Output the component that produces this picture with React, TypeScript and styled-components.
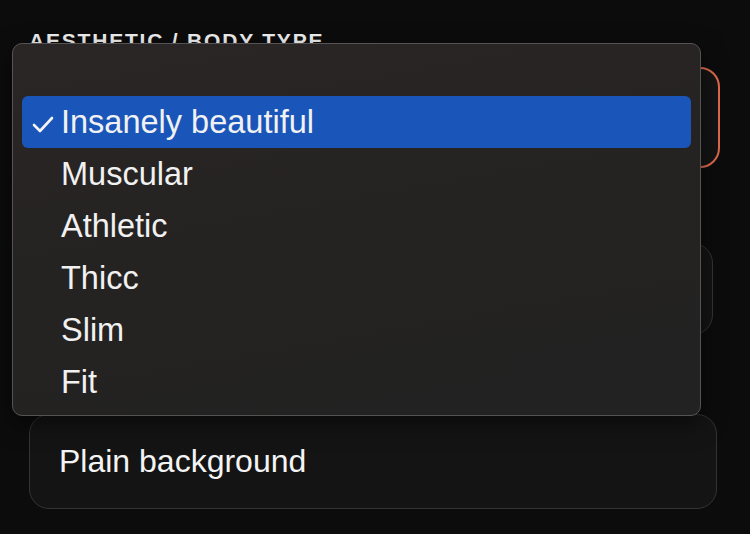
import React from 'react'
import styled, { createGlobalStyle } from 'styled-components'

const GlobalStyle = createGlobalStyle`
  html, body {
    margin: 0;
    padding: 0;
    background: #0c0c0c;
    font-family: "Liberation Sans", Arial, sans-serif;
  }
`

const Page = styled.div`
  position: relative;
  width: 750px;
  height: 534px;
  overflow: hidden;
  background: #0c0c0c;
  box-sizing: border-box;
  padding: 29px 0 0 29px;
  display: flex;
  flex-direction: column;
`

const Label = styled.div<{ $mt?: number }>`
  margin-top: ${p => p.$mt ?? 0}px;
  height: 24px;
  line-height: 24px;
  font-size: 21px;
  font-weight: 700;
  letter-spacing: 1.8px;
  color: #f2f2f2;
  text-transform: uppercase;
`

const Field = styled.div<{ $w: number; $h: number; $mt: number; $focus?: boolean }>`
  margin-top: ${p => p.$mt}px;
  width: ${p => p.$w}px;
  height: ${p => p.$h}px;
  box-sizing: border-box;
  border-radius: 20px;
  border: ${p => (p.$focus ? '2px solid #e06a4c' : '1.5px solid #343434')};
  background: #141414;
  display: flex;
  align-items: center;
  padding-left: 29px;
  font-size: 32px;
  color: #f4f4f4;
`

const Menu = styled.div`
  position: absolute;
  left: 12px;
  top: 43px;
  width: 689px;
  height: 373px;
  box-sizing: border-box;
  border: 1px solid #555353;
  border-radius: 10px;
  background: linear-gradient(170deg, #2a2625 0%, #252322 45%, #222222 100%);
  box-shadow: 0 8px 24px rgba(0, 0, 0, 0.5);
  padding: 52px 9px 0 9px;
  display: flex;
  flex-direction: column;
`

const Option = styled.div<{ $selected?: boolean }>`
  height: 52px;
  box-sizing: border-box;
  border-radius: 6px;
  background: ${p => (p.$selected ? '#1a56b9' : 'transparent')};
  display: flex;
  align-items: center;
  font-size: 32.5px;
  color: #f1f1f1;
  position: relative;
  padding-left: 39px;
`

const Check = styled.svg`
  position: absolute;
  left: 10px;
  top: 20px;
`

const options = ['Insanely beautiful', 'Muscular', 'Athletic', 'Thicc', 'Slim', 'Fit']

export default function App() {
  return (
    <>
      <GlobalStyle />
      <Page>
        <Label>Aesthetic / Body Type</Label>
        {/* fields below the open menu: their contents are hidden by it */}
        <Field $w={691} $h={101} $mt={14} $focus />
        <Field $w={684} $h={92} $mt={75} />
        <Field $w={688} $h={95} $mt={79}>
          Plain background
        </Field>
        <Menu>
          {options.map((o, i) => (
            <Option key={o} $selected={i === 0}>
              {i === 0 && (
                <Check width="22" height="17" viewBox="0 0 22 17">
                  <polyline
                    points="2,9 8,15 20,2"
                    fill="none"
                    stroke="#f4f4f4"
                    strokeWidth="2.6"
                    strokeLinecap="round"
                    strokeLinejoin="round"
                  />
                </Check>
              )}
              {o}
            </Option>
          ))}
        </Menu>
      </Page>
    </>
  )
}
